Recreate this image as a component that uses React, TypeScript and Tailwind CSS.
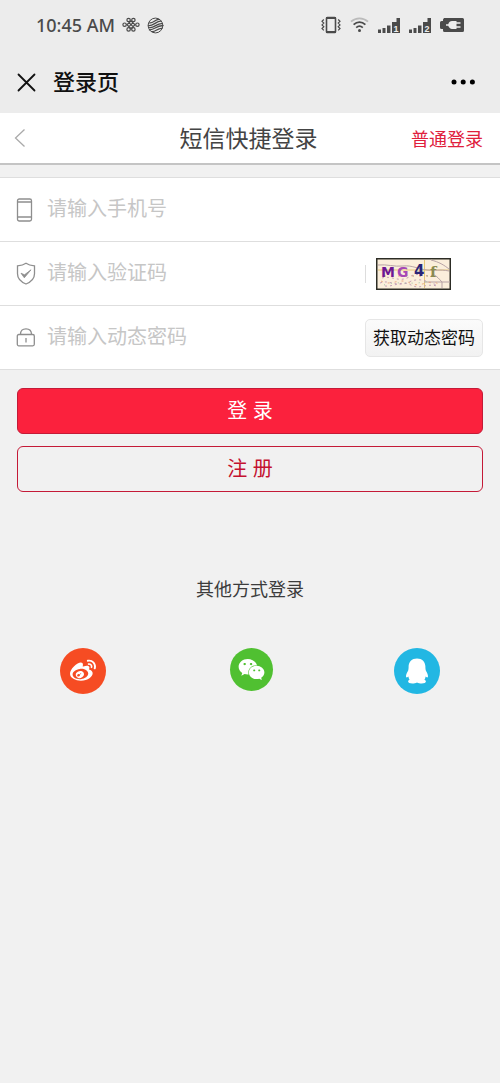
import type { ReactNode } from "react";
import { FaWeibo, FaWeixin } from "react-icons/fa";

function StatusBar() {
  return (
    <div className="flex h-[50px] items-center justify-between pr-9 pl-9 text-[#4a4a4a]">
      <div className="flex items-center gap-[7px]">
        <span className="font-['Noto_Sans',sans-serif] text-[18px] leading-6 font-medium">10:45 AM</span>
        <svg width="18" height="16" viewBox="0 0 18 16" fill="none" stroke="currentColor" strokeWidth="1.2">
          <circle cx="6.600" cy="3" r="1.7" />
          <circle cx="11.400" cy="3" r="1.7" />
          <circle cx="6.600" cy="12.400" r="1.7" />
          <circle cx="11.400" cy="12.400" r="1.7" />
          <circle cx="2.6" cy="7.7" r="1.7" />
          <circle cx="15.4" cy="7.7" r="1.7" />
          <path d="M9 3.800 5 7.700 9 11.600 13 7.700ZM7 5.700l4 4M11 5.700l-4 4" />
        </svg>
        <svg width="17" height="17" viewBox="0 0 17 17" fill="none" stroke="currentColor" strokeWidth="1.3" strokeLinecap="round">
          <circle cx="8.5" cy="8.5" r="7.4" strokeWidth="1" />
          <path d="M2.6 5.8C6 6.6 8.4 2 12 2.4M1.6 8.6C6 9.2 10 3.6 14 4.2M2.6 10.6C6.8 11.4 10.6 5.8 15 6.6M2.4 12.8C7 13.2 10.8 8 15.4 8.8M5 14.6C8.4 15 11.4 10.6 14.8 11.4" />
        </svg>
      </div>
      <div className="flex items-center gap-[9px]">
        <svg width="20" height="18" viewBox="0 0 20 18" fill="none" stroke="currentColor">
          <rect x="5.5" y="1.5" width="9" height="15" rx="0.8" strokeWidth="1.6" />
          <path d="M5 2h10M5 16h10" strokeWidth="2" />
          <path d="M2.8 3.5 1 5.3 2.8 7.1 1 8.9 2.8 10.7 1 12.5 2.8 14.3M17.2 3.5 19 5.3 17.2 7.1 19 8.9 17.2 10.7 19 12.5 17.2 14.3" strokeWidth="1.2" />
        </svg>
        <svg width="19" height="16" viewBox="0 0 19 16" fill="none" stroke="currentColor" strokeWidth="1.8">
          <path d="M1 4.6C6 .2 13 .2 18 4.6" className="opacity-30" />
          <path d="M3.6 7.6C7.2 4.4 11.8 4.4 15.4 7.6M6.2 10.6C8.3 8.8 10.7 8.8 12.8 10.6" />
          <circle cx="9.5" cy="13.6" r="1.5" fill="currentColor" stroke="none" />
        </svg>
        <Signal slot="1" />
        <Signal slot="2" />
        <svg width="24" height="14" viewBox="0 0 24 14">
          <path fill="currentColor" d="M4 0h18.500a1.500 1.500 0 0 1 1.500 1.500v11a1.500 1.500 0 0 1-1.500 1.500H4.500A1.500 1.500 0 0 1 3 12.500V11H1.500A1.500 1.500 0 0 1 0 9.500v-5A1.500 1.500 0 0 1 1.500 3H3V1.500Z" />
          <path fill="#ededed" d="M6 6.200h2.200c.8-2 2-3.200 3.800-3.200h4.500v1.200h4v1.600h-4v2.400h4v1.600h-4V11H12c-1.800 0-3-1.200-3.800-3.200H6Z" />
        </svg>
      </div>
    </div>
  );
}

function Signal({ slot }: { slot: string }) {
  return (
    <svg width="22" height="15" viewBox="0 0 22 15" fill="currentColor">
      <path d="M0 11.500h3V15H0zM4.500 10h3v5h-3zM9 7.500h3.500V15H9zM14 15V4h4.500V0H22v15z" />
      <text x="15.500" y="14" fontSize="9" fontWeight="700" fill="#ededed" className="font-['Liberation_Sans',sans-serif]">
        {slot}
      </text>
    </svg>
  );
}

function Field({ id, label, icon, children }: { id: string; label: string; icon: ReactNode; children?: ReactNode }) {
  return (
    <div className="flex h-16 items-center border-b border-[#dedede] pr-[17px] pl-4">
      <label htmlFor={id} aria-label={label} className="w-[31px] shrink-0 text-[#8e8e8e]">
        {icon}
      </label>
      <input
        id={id}
        type="text"
        placeholder={label}
        className="h-10 min-w-0 flex-1 bg-transparent text-[20px] text-[#333] outline-none placeholder:text-[#c6c6c6]"
      />
      {children}
    </div>
  );
}

function Captcha() {
  return (
    <svg width="75" height="32" viewBox="0 0 75 32" className="block">
      <rect x="0.750" y="0.750" width="73.500" height="30.500" fill="#fbeedb" stroke="#2c2c25" strokeWidth="1.500" />
      <g fill="none" strokeWidth="1">
        <path stroke="#e5c777" d="M48.500 2v28M2 12h71" />
        <path stroke="#b8a3a6" d="M2 7c9-1 16 2 25 1s15 3 24 4 12-1 22 1M55 2c8 2 13 5 18 9M66 30v-6h8M48 24h18c-3-3-5-6-8-7" />
        <path stroke="#c4a0b6" strokeDasharray="2 3" d="M6 20c9-3 17 5 27-1s17 1 24-2M4 25c10-4 16 5 29-1s21 2 29 3M9 28c9 1 17-6 26-1s14-2 26 1" />
        <path stroke="#e9aa83" strokeDasharray="2 5" d="M5 23c10 6 18-4 29 2s20-6 30 2M8 18h50" />
        <path stroke="#9fc5a5" strokeDasharray="1 6" d="M8 27c15-5 25 1 45-4M30 18h28" />
      </g>
      <g fontSize="15" fontWeight="700" className="font-['DejaVu_Sans',sans-serif]">
        <text x="5" y="19" fontSize="14" fill="#6d1693">M</text>
        <text x="21" y="19" fontSize="14" fill="#a648b5">G</text>
        <text x="38" y="18" fill="#292477">4</text>
        <text x="54" y="19" fill="#8b8a50" className="font-['DejaVu_Serif',serif]">f</text>
      </g>
    </svg>
  );
}

export default function App() {
  return (
    <div className="min-h-screen bg-[#f1f1f1] font-['Liberation_Sans','Noto_Sans_CJK_SC',sans-serif] text-[#333]">
      <header className="bg-[#ececec]">
        <StatusBar />
        <div className="flex h-[63px] items-center justify-between pt-px pr-6 pl-[17px]">
          <div className="flex items-center gap-[17px]">
            <button type="button" aria-label="关闭">
              <svg width="19" height="19" viewBox="0 0 19 19" fill="none" stroke="#111" strokeWidth="1.800" strokeLinecap="round">
                <path d="M1.500 1.500 17.500 17.500M17.500 1.500 1.500 17.500" />
              </svg>
            </button>
            <span className="pt-0.5 text-[22px] leading-8 font-medium text-[#111]">登录页</span>
          </div>
          <button type="button" aria-label="更多">
            <svg width="25" height="6" viewBox="0 0 25 6" fill="#000">
              <circle cx="3" cy="3" r="2.500" />
              <circle cx="12.200" cy="3" r="2.500" />
              <circle cx="21.400" cy="3" r="2.500" />
            </svg>
          </button>
        </div>
      </header>

      <nav className="grid h-[52px] grid-cols-[1fr_auto_1fr] items-center border-b-2 border-[#c4c4c4] bg-white pr-[17px] pl-[14px]">
        <button type="button" aria-label="返回" className="justify-self-start">
          <svg width="12" height="20" viewBox="0 0 12 20" fill="none" stroke="#aaa" strokeWidth="1.300">
            <path d="M10.500 1.500 1.500 10l9 8.500" />
          </svg>
        </button>
        <h1 className="pt-0.5 text-[23px] leading-8 text-[#444]">短信快捷登录</h1>
        <a href="#password" className="justify-self-end pt-1 text-[18px] leading-6 text-[#e0203c]">
          普通登录
        </a>
      </nav>

      <form onSubmit={(e) => e.preventDefault()}>
        <div className="mt-3 border-t border-[#dedede] bg-white">
          <Field
            id="phone"
            label="请输入手机号"
            icon={
              <svg width="17" height="24" viewBox="0 0 17 24" fill="none" stroke="currentColor" strokeWidth="1.300">
                <rect x="1.500" y="1" width="14" height="22" rx="1.800" />
                <path d="M1.500 4h14M1.500 19h14" />
              </svg>
            }
          />
          <Field
            id="captcha"
            label="请输入验证码"
            icon={
              <svg width="20" height="23" viewBox="0 0 20 23" fill="none" stroke="currentColor" strokeWidth="1.300">
                <path d="M10 1.200C7.500 3 4.500 3.600 1.500 3.800v8c0 5 3.500 8.200 8.500 10.200 5-2 8.500-5.200 8.500-10.200v-8C15.500 3.600 12.500 3 10 1.200Z" />
                <path d="M5 11.200 8.300 15.800 15 7.800 8.500 12.800Z" fill="currentColor" strokeWidth="0.800" />
              </svg>
            }
          >
            <span className="mr-[10px] h-[18px] w-px bg-[#ddd]" />
            <button type="button" aria-label="刷新验证码" className="mr-8">
              <Captcha />
            </button>
          </Field>
          <Field
            id="sms-code"
            label="请输入动态密码"
            icon={
              <svg width="20" height="20" viewBox="0 0 20 20" fill="none" stroke="currentColor" strokeWidth="1.300">
                <rect x="1.300" y="6.500" width="17" height="11.300" rx="1.500" />
                <path d="M4.500 6.500C4.500 2.500 6.500 .8 10 .8s5.500 1.700 5.500 5.700M10 10v4.500" />
              </svg>
            }
          >
            <button
              type="button"
              className="h-[38px] shrink-0 rounded-[5px] border border-[#e6e6e6] bg-linear-to-b from-[#fbfbfb] to-[#f2f2f2] px-[7px] pt-0.5 text-[17px] leading-6 text-[#111]"
            >
              获取动态密码
            </button>
          </Field>
        </div>

        <div className="mt-[18px] flex flex-col gap-3 px-[17px]">
          <button type="submit" className="h-[46px] rounded-md border border-[#c41a37] bg-[#fb213d] text-[20px] leading-6 text-white">
            登 录
          </button>
          <button type="button" className="h-[46px] rounded-md border border-[#c41a37] text-[20px] leading-6 text-[#c41230]">
            注 册
          </button>
        </div>
      </form>

      <section className="mt-[84px]">
        <h2 className="text-center text-[18px] leading-7 text-[#3c3c3c]">其他方式登录</h2>
        <div className="mt-11 grid grid-cols-3 items-start justify-items-center">
          <a href="#weibo" aria-label="微博登录" className="flex size-[46px] items-center justify-center rounded-full bg-[#f64c23] text-white">
            <FaWeibo size={26} />
          </a>
          <a href="#wechat" aria-label="微信登录" className="ml-1 flex size-[43px] items-center justify-center rounded-full bg-[#50c031] text-white">
            <FaWeixin size={27} />
          </a>
          <a href="#qq" aria-label="QQ登录" className="flex size-[46px] items-center justify-center rounded-full bg-[#22b7e3] text-white">
            <svg width="24" height="26" viewBox="0 0 24 26" fill="currentColor">
              <path d="M12 .4c5.200 0 8.400 3.400 8.400 8.200 0 1.700.1 2.900.5 4.100 1.200 2.100 2.200 4.100 2.100 5.700-.1 1-.9 1.300-1.700.7l-.7-.5c-.1 1.200-.5 2.200-1.200 3.200.9.400 1.500.9 1.500 1.800 0 1.300-1.700 1.800-4.200 1.800-1.900 0-3.300-.2-4.700-1-1.400.8-2.800 1-4.700 1-2.500 0-4.200-.5-4.200-1.800 0-.9.600-1.400 1.500-1.800-.7-1-1.100-2-1.200-3.200l-.7.5c-.8.6-1.600.3-1.700-.7-.1-1.600.9-3.600 2.100-5.700.4-1.200.5-2.400.5-4.100C3.600 3.800 6.800.4 12 .4Z" />
            </svg>
          </a>
        </div>
      </section>
    </div>
  );
}
